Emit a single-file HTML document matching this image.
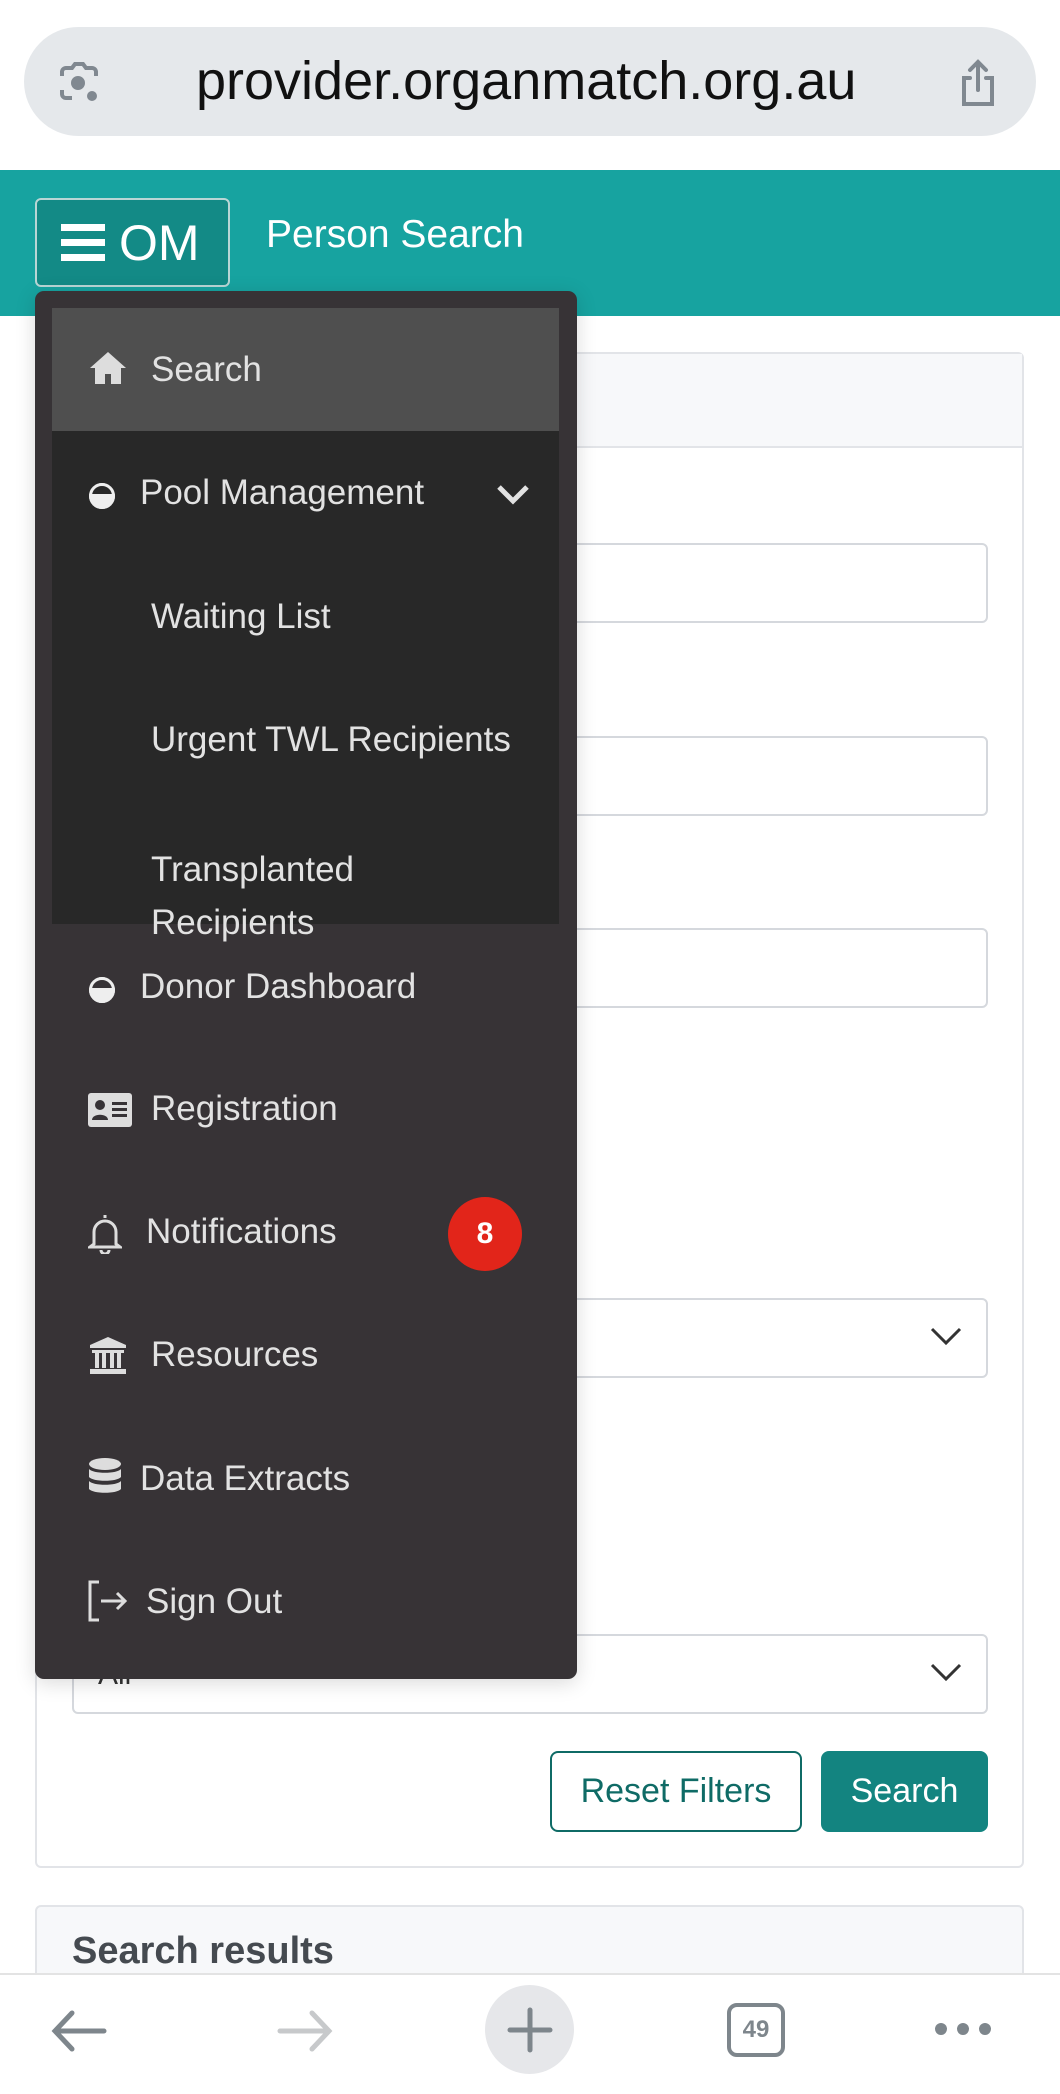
<!DOCTYPE html>
<html><head><meta charset="utf-8"><style>
*{box-sizing:border-box;margin:0;padding:0}
body{width:1060px;height:2094px;position:relative;overflow:hidden;background:#fff;font-family:"Liberation Sans",sans-serif}
.abs{position:absolute}
.url{left:24px;top:27px;width:1012px;height:109px;border-radius:55px;background:#e5e8eb}
.hdr{left:0;top:170px;width:1060px;height:146px;background:#17a3a0}
.om{left:35px;top:198px;width:195px;height:89px;border:2px solid #b9d6d5;border-radius:6px;background:#138a86;color:#fff;font-size:50px}
.card{left:35px;border:2px solid #e2e4e8;border-radius:6px;background:#fff}
.inp{left:72px;width:916px;height:80px;border:2px solid #d5d8dd;border-radius:6px;background:#fff}
.menu{left:35px;top:291px;width:542px;height:1388px;background:#373336;border-radius:9px;box-shadow:0 4px 20px rgba(0,0,0,.15)}
.it{position:absolute;color:#e2e2e2;font-size:35px;line-height:40px}
.ico{position:absolute}
</style></head><body>
<div class="abs url"></div>
<svg class="abs" style="left:54px;top:58px" width="50" height="50" viewBox="0 0 50 50" fill="none" stroke="#808890" stroke-width="4"><path d="M8 18v-4a4 4 0 0 1 4-4h6l3-4h8l3 4h6a4 4 0 0 1 4 4v4M8 32v4a4 4 0 0 0 4 4h6"/><circle cx="24" cy="25" r="5" fill="#808890"/><circle cx="38" cy="38" r="3" fill="#808890"/></svg>
<div class="abs" style="left:196px;top:50px;font-size:54px;color:#111">provider.organmatch.org.au</div>
<svg class="abs" style="left:956px;top:58px" width="44" height="50" viewBox="0 0 44 50" fill="none" stroke="#808890" stroke-width="4" stroke-linecap="round"><path d="M14 20H8v26h28V20h-6M22 4v28M14 12l8-8 8 8"/></svg>
<div class="abs hdr"></div>
<div class="abs om"><svg style="position:absolute;left:24px;top:24px" width="46" height="38"><rect y="0" width="44" height="7" fill="#fff"/><rect y="15" width="44" height="7" fill="#fff"/><rect y="30" width="44" height="7" fill="#fff"/></svg><span style="position:absolute;left:82px;top:14px">OM</span></div>
<div class="abs" style="left:266px;top:213px;color:#fff;font-size:39px">Person Search</div>

<div class="abs card" style="top:352px;width:989px;height:1516px"><div style="height:94px;background:#f7f8fa;border-bottom:2px solid #e2e4e8"></div></div>
<div class="abs inp" style="top:543px"></div>
<div class="abs inp" style="top:736px"></div>
<div class="abs inp" style="top:928px"></div>
<div class="abs inp" style="top:1298px"><svg style="position:absolute;right:24px;top:26px" width="32" height="20" fill="none" stroke="#333" stroke-width="3"><path d="M2 3l14 14 14-14"/></svg></div>
<div class="abs inp" style="top:1634px"><span style="position:absolute;left:24px;top:22px;font-size:30px;color:#333">All</span><svg style="position:absolute;right:24px;top:26px" width="32" height="20" fill="none" stroke="#333" stroke-width="3"><path d="M2 3l14 14 14-14"/></svg></div>
<div class="abs" style="left:550px;top:1751px;width:252px;height:81px;border:2px solid #0f6b66;border-radius:8px;color:#0f6b66;font-size:34px;text-align:center;line-height:77px">Reset Filters</div>
<div class="abs" style="left:821px;top:1751px;width:167px;height:81px;background:#138480;border-radius:8px;color:#fff;font-size:34px;text-align:center;line-height:81px">Search</div>
<div class="abs card" style="top:1905px;width:989px;height:120px;background:#f7f8fa"></div>
<div class="abs" style="left:72px;top:1930px;font-size:38px;font-weight:bold;color:#454a50">Search results</div>

<div class="abs menu">
 <div style="position:absolute;left:17px;top:17px;width:507px;height:123px;background:#4f4f4f"></div>
 <div style="position:absolute;left:17px;top:140px;width:507px;height:493px;background:#282828"></div>
</div>
<svg class="ico" style="left:88px;top:350px" width="40" height="36" viewBox="0 0 40 36" fill="#ddd"><path d="M20 2L2 18h5v16h10v-10h6v10h10V18h5z"/></svg>
<div class="it" style="left:151px;top:350px">Search</div>
<svg class="ico" style="left:87px;top:481px" width="30" height="30"><circle cx="15" cy="15" r="13" fill="#eee"/><rect x="2" y="4" width="26" height="9" fill="#282828"/><circle cx="15" cy="15" r="11.5" fill="none" stroke="#eee" stroke-width="3"/></svg>
<div class="it" style="left:140px;top:473px">Pool Management</div>
<svg class="ico" style="left:496px;top:484px" width="34" height="22" fill="none" stroke="#e2e2e2" stroke-width="5"><path d="M3 3l14 14 14-14"/></svg>
<div class="it" style="left:151px;top:597px">Waiting List</div>
<div class="it" style="left:151px;top:720px">Urgent TWL Recipients</div>
<div class="it" style="left:151px;top:843px;line-height:53px">Transplanted<br>Recipients</div>
<svg class="ico" style="left:87px;top:975px" width="30" height="30"><circle cx="15" cy="15" r="13" fill="#eee"/><rect x="2" y="4" width="26" height="9" fill="#373336"/><circle cx="15" cy="15" r="11.5" fill="none" stroke="#eee" stroke-width="3"/></svg>
<div class="it" style="left:140px;top:967px">Donor Dashboard</div>
<svg class="ico" style="left:88px;top:1093px" width="44" height="34" viewBox="0 0 44 34"><rect width="44" height="34" rx="3" fill="#ddd"/><circle cx="12" cy="12" r="5" fill="#373336"/><path d="M4 27c0-7 16-7 16 0z" fill="#373336"/><rect x="24" y="9" width="15" height="3" fill="#373336"/><rect x="24" y="15" width="15" height="3" fill="#373336"/><rect x="24" y="21" width="15" height="3" fill="#373336"/></svg>
<div class="it" style="left:151px;top:1089px">Registration</div>
<svg class="ico" style="left:88px;top:1212px" width="34" height="42" viewBox="0 0 34 42" fill="none" stroke="#ddd" stroke-width="3"><path d="M17 3v3M6 32V20a11 11 0 0 1 22 0v12l4 3H2z M13 38a4 4 0 0 0 8 0"/></svg>
<div class="it" style="left:146px;top:1212px">Notifications</div>
<div class="abs" style="left:448px;top:1197px;width:74px;height:74px;border-radius:50%;background:#e2251a;color:#fff;font-size:30px;font-weight:bold;text-align:center;line-height:74px">8</div>
<svg class="ico" style="left:88px;top:1337px" width="40" height="38" viewBox="0 0 40 38" fill="#ddd"><path d="M20 0L2 8v3h36V8z"/><rect x="4" y="13" width="32" height="3"/><rect x="7" y="16" width="4" height="15"/><rect x="14" y="16" width="4" height="15"/><rect x="22" y="16" width="4" height="15"/><rect x="29" y="16" width="4" height="15"/><rect x="2" y="32" width="36" height="5"/></svg>
<div class="it" style="left:151px;top:1335px">Resources</div>
<svg class="ico" style="left:88px;top:1458px" width="34" height="42" viewBox="0 0 34 42" fill="#ddd"><ellipse cx="17" cy="6" rx="16" ry="6"/><path d="M1 11c4 5 28 5 32 0v8c-4 5-28 5-32 0zM1 23c4 5 28 5 32 0v8c-4 5-28 5-32 0z"/></svg>
<div class="it" style="left:140px;top:1459px">Data Extracts</div>
<svg class="ico" style="left:87px;top:1580px" width="42" height="42" viewBox="0 0 42 42" fill="none" stroke="#ddd" stroke-width="3"><path d="M12 2H3v38h9M14 21h24M30 13l8 8-8 8"/></svg>
<div class="it" style="left:146px;top:1582px">Sign Out</div>

<div class="abs" style="left:0;top:1973px;width:1060px;height:121px;background:#fff;border-top:2px solid #e3e3e3"></div>
<svg class="abs" style="left:50px;top:2009px" width="58" height="44" fill="none" stroke="#7e868c" stroke-width="5" stroke-linecap="round"><path d="M54 22H6M22 4L5 22l17 18"/></svg>
<svg class="abs" style="left:276px;top:2009px" width="58" height="44" fill="none" stroke="#c7c9cb" stroke-width="5" stroke-linecap="round"><path d="M4 22h48M36 4l17 18-17 18"/></svg>
<div class="abs" style="left:485px;top:1985px;width:89px;height:89px;border-radius:50%;background:#e6e7ea"></div>
<svg class="abs" style="left:507px;top:2007px" width="46" height="46" stroke="#7e868c" stroke-width="5" stroke-linecap="round"><path d="M23 3v40M3 23h40"/></svg>
<div class="abs" style="left:727px;top:2003px;width:58px;height:54px;border:4px solid #7e868c;border-radius:10px;color:#7e868c;font-size:24px;font-weight:bold;text-align:center;line-height:46px">49</div>
<svg class="abs" style="left:933px;top:2019px" width="60" height="20" fill="#7e868c"><circle cx="8" cy="10" r="6"/><circle cx="30" cy="10" r="6"/><circle cx="52" cy="10" r="6"/></svg>
</body></html>
